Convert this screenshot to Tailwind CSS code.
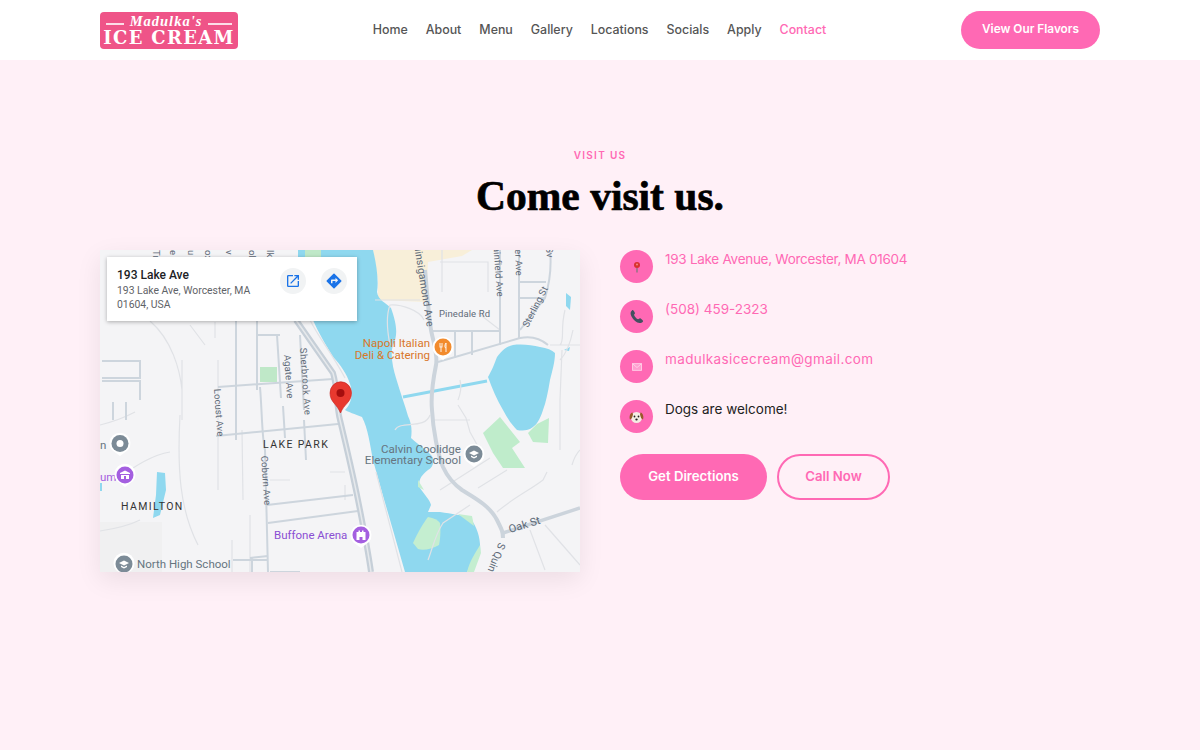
<!DOCTYPE html>
<html lang="en">
<head>
  <meta charset="UTF-8">
  <meta name="viewport" content="width=device-width, initial-scale=1">
  <title>Madulka's Ice Cream - Contact</title>
  <script src="https://cdn.jsdelivr.net/npm/@tailwindcss/browser@4"></script>
</head>
<body class="bg-[#fff0f7] min-h-screen font-['Inter',sans-serif] text-[#111]">

  <!-- nav -->
  <header class="bg-white h-[60px] px-[100px] flex items-center justify-between">
    <a href="#" class="w-[138px] h-[37px] bg-[#ef5488] rounded-[4px] flex flex-col items-center justify-center text-white overflow-hidden">
      <span class="flex items-center gap-[6px] h-[14px] mt-[1px]">
        <span class="w-[18px] h-[1.5px] bg-white/80 mt-[5px]"></span>
        <span class="font-['Liberation_Serif',serif] italic font-bold text-[14.500px] leading-none tracking-[1px]">Madulka's</span>
        <span class="w-[24px] h-[1.5px] bg-white/80 mt-[5px]"></span>
      </span>
      <span class="font-['DejaVu_Serif',serif] font-bold text-[18px] leading-[18px] whitespace-nowrap tracking-[1.300px]">ICE CREAM</span>
    </a>
    <nav class="flex items-center gap-[18px] text-[12.400px] font-medium text-[#555]">
      <a href="#">Home</a>
      <a href="#">About</a>
      <a href="#">Menu</a>
      <a href="#">Gallery</a>
      <a href="#">Locations</a>
      <a href="#">Socials</a>
      <a href="#">Apply</a>
      <a href="#" class="text-[#ff69b4]">Contact</a>
    </nav>
    <a href="#" class="w-[139px] h-[38px] rounded-full bg-[#ff69b4] text-white text-[11.800px] font-semibold flex items-center justify-center">View Our Flavors</a>
  </header>

  <main class="max-w-[1000px] mx-auto">
    <div class="pt-[89px] text-center">
      <p class="text-[10px] leading-[12px] font-semibold tracking-[1.300px] text-[#ff69b4]">VISIT US</p>
      <h1 class="font-['Liberation_Serif',serif] font-bold text-[41.500px] leading-[48px] mt-[11px] text-black [-webkit-text-stroke:0.7px_black]">Come visit us.</h1>
    </div>

    <div class="grid grid-cols-[480px_1fr] gap-[40px] mt-[30px]">
      <!-- map -->
      <div class="relative h-[322px] overflow-hidden shadow-[0_8px_24px_rgba(0,0,0,0.08)] bg-[#f4f4f6]">
        <svg class="w-full h-full block" viewBox="100 250 480 322" xmlns="http://www.w3.org/2000/svg">
          <rect x="100" y="250" width="480" height="322" fill="#f4f4f6"/>
          <!-- land colours -->
          <path d="M373 250H472L462 256L428 262L426 302L378 300L378 280Z" fill="#f8efd9"/>
          <path d="M260 367H277V382H260Z" fill="#bfe8c8"/>
          <path d="M483 433L500 417L520 442L512 448L525 468L503 468L493 453Z" fill="#bfeccb"/>
          <path d="M528 433L537 424L549 418L548 443L533 442Z" fill="#bfeccb"/>
          <!-- water -->
          <path d="M298 250H373C376 262 379 280 377 292C378 300 386 303 391 308C397 325 398 335 393 345C390 355 393 368 396 378C400 392 405 405 408 416C412 424 412 432 411 438C420 446 430 452 433 458C434 464 432 468 428 470C420 476 418 482 420 488C424 494 430 500 431 505L428 512L440 512C452 514 462 515 470 518C478 528 481 540 480 553C474 560 470 566 467 572H405C396 540 384 500 373 460C370 445 368 428 362 417C355 414 348 412 345 410C352 404 353 392 350 384C347 374 340 364 333 357C326 345 318 332 313 320L298 300Z" fill="#8fd8ef"/>
          <path d="M305 250H321V257H305Z" fill="#bfe8c8"/>
          <path d="M413 543C418 532 424 522 428 517C434 518 438 520 440 523C441 532 440 540 439 545C432 549 423 551 418 549Z" fill="#c4eed0"/>
          <path d="M458 514L472 516L474 526Z" fill="#c4eed0"/>
          <path d="M467 572C470 560 476 552 480 545L481 553L474 572Z" fill="#c4eed0"/>
          <path d="M418 480L424 490L418 487Z" fill="#c4eed0"/>
          <path d="M488 377C492 370 494 365 497 357C503 349 508 346 513 345C522 344 532 345 540 347C547 348 552 350 555 353C555 362 552 372 550 380C548 392 546 402 543 410C540 420 536 425 533 427C528 431 522 431 517 430C512 425 507 418 503 410C497 400 492 388 488 377Z" fill="#8fd8ef"/>
          <path d="M403 397L487 381" stroke="#8fd8ef" stroke-width="3" fill="none"/>
          <path d="M157 472L165 473L166 490L160 515L153 518L156 495Z" fill="#8fd8ef"/>
          <path d="M566 293L571 297L570 310L566 306Z" fill="#8fd8ef"/>
          <path d="M564 350L570 347L569 351Z" fill="#8fd8ef"/>
          <path d="M100 483H102V491H100Z" fill="#8fd8ef"/>
          <rect x="100" y="522" width="62" height="50" fill="#f0f0f1"/>
          <!-- minor roads -->
          <g fill="none" stroke="#e0e2e6" stroke-width="1.200">
            <path d="M150 321C172 340 180 370 182 390M182 360V420"/>
            <path d="M215 322V338M190 325L205 345"/>
            <path d="M218 360V420M218 425V490M242 430L243 500"/>
            <path d="M135 412C120 420 100 425 100 425M170 452C150 455 130 470 115 480M100 531C120 528 130 525 140 520"/>
            <path d="M180 415C177 470 180 510 198 545M232 540V572M250 515V572"/>
            <path d="M270 480H290M330 472H345M345 485V500"/>
            <path d="M310 320C320 340 330 350 345 378M376 472L402 572"/>
            <path d="M442 250V292M375 300H420M440 262H488V292M424 320C420 310 400 304 390 305C385 318 388 335 390 345"/>
            <path d="M460 380C462 388 460 395 458 400M434 420H470M430 415C425 430 400 420 395 430"/>
            <path d="M458 405L466 418L470 432L480 450M440 490L490 458M478 488L507 470M497 512C510 500 530 490 543 480L547 472M470 505L443 523C435 535 432 550 428 560"/>
            <path d="M530 530L545 570M545 525L580 565M572 465C575 455 580 450 580 450M562 350L560 400V450M565 310C560 330 565 340 560 345M550 345L580 345"/>
            <path d="M573 330C570 345 565 355 560 360"/>
            <path d="M478 313L500 330"/>
          </g>
          <!-- local streets -->
          <g fill="none" stroke="#cdd5dd" stroke-width="2">
            <path d="M102 361H140V378H102M102 381H140V400M113 402V420M126 402V420"/>
            <path d="M236 320V440M257 320V390"/>
            <path d="M218 387L333 379"/>
            <path d="M216 436L338 424"/>
            <path d="M260 387C262 410 262 440 265 450L268 572"/>
            <path d="M277 335L281 398M280 335H258"/>
            <path d="M283 406L285 438M300 335L304 410M304 420L306 460"/>
            <path d="M267 505L353 495M268 523L358 511"/>
            <path d="M250 558L268 556M233 560H268M252 558V572M270 572H300"/>
            <path d="M430 331H500M455 331V358M472 331V355M500 250V345M520 282H546M519 250V338"/>
            <path d="M519 298H545M520 330L545 298C549 285 552 270 550 250M438 362L520 338C530 336 540 338 548 345"/>
          </g>
          <!-- main roads -->
          <g fill="none">
            <path d="M296 320L333 373C338 390 336 405 340 420C346 445 352 470 358 500C363 525 368 550 371 572" stroke="#c6cfd8" stroke-width="6"/>
            <path d="M296 320L333 373C338 390 336 405 340 420C346 445 352 470 358 500C363 525 368 550 371 572" stroke="#e6e9ec" stroke-width="1.500"/>
            <path d="M425 270C427 290 428 310 431 330C434 345 438 355 436 365C432 385 431 400 432 410C433 430 438 455 443 467C448 478 455 485 462 490C475 498 490 506 497 520C502 530 503 532 503 538" stroke="#ccd4dc" stroke-width="4"/>
            <path d="M503 533L580 508" stroke="#ccd4dc" stroke-width="3.500"/>
          </g>
          <!-- street labels -->
          <g font-family="Roboto, sans-serif" font-size="9.500" fill="#5e6a78" letter-spacing="0.100">
            <text transform="translate(284 355) rotate(86)">Agate Ave</text>
            <text transform="translate(300 348) rotate(86)" letter-spacing="0.500">Sherbrook Ave</text>
            <text transform="translate(214 389) rotate(86)">Locust Ave</text>
            <text transform="translate(261 456) rotate(86)">Coburn Ave</text>
            <text transform="translate(427 327) rotate(81)" text-anchor="end" font-size="10.500">Quinsigamond Ave</text>
            <text transform="translate(497 297) rotate(86)" text-anchor="end">Plainfield Ave</text>
            <text transform="translate(516 276) rotate(88)" text-anchor="end">Fowler Ave</text>
            <text transform="translate(528 328) rotate(-63)">Sterling St</text>
            <text transform="translate(547 258) rotate(85)" text-anchor="end">Sv</text>
            <text x="439" y="317" font-size="9.500">Pinedale Rd</text>
            <text transform="translate(510 533) rotate(-17)" font-size="11">Oak St</text>
            <text transform="translate(499 542) rotate(112)" font-size="10.500">S Quin</text>
            <text transform="translate(153 250) rotate(90)">Tr</text>
            <text transform="translate(170 250) rotate(90)">e</text>
            <text transform="translate(188 250) rotate(90)">u</text>
            <text transform="translate(205 250) rotate(90)">ox</text>
            <text transform="translate(226 250) rotate(90)">v</text>
            <text transform="translate(249 250) rotate(90)">ob</text>
            <text transform="translate(267 250) rotate(90)">lk</text>
          </g>
          <!-- area labels -->
          <g font-family="Roboto, sans-serif" font-size="10.500" font-weight="400" fill="#333" letter-spacing="1.400">
            <text x="263" y="448">LAKE PARK</text>
            <text x="121" y="510">HAMILTON</text>
          </g>
          <!-- place labels -->
          <g font-family="Roboto, sans-serif" font-size="11.500">
            <text x="430" y="347" text-anchor="end" fill="#d9772a">Napoli Italian</text>
            <text x="430" y="359" text-anchor="end" fill="#d9772a">Deli &amp; Catering</text>
            <text x="461" y="453" text-anchor="end" fill="#66757f" font-size="11.600">Calvin Coolidge</text>
            <text x="461" y="464" text-anchor="end" fill="#66757f" font-size="11.600">Elementary School</text>
            <text x="137" y="568" fill="#66757f">North High School</text>
            <text x="274" y="539" fill="#8a4fd3">Buffone Arena</text>
            <text x="100" y="449" fill="#66757f">n</text>
            <text x="100" y="481" fill="#a45fe0">um</text>
          </g>
          <!-- poi markers -->
          <g>
            <path d="M443 360L435 354A10.500 10.500 0 1 1 451 354Z" fill="#fff"/><circle cx="443" cy="347" r="8.500" fill="#f28b2d"/>
            <path d="M440 343V347.500M442 343V347.500M440 347H442M441 347.500V352M446 343V352M446 343C444.500 345 444.500 348 446 348" stroke="#fff" stroke-width="0.900" fill="none"/>
            <path d="M120 456L112 450A10.500 10.500 0 1 1 128 450Z" fill="#fff"/><circle cx="120" cy="443.500" r="8.500" fill="#7c8b97"/><circle cx="120" cy="443.500" r="3.500" fill="#fff"/>
            <path d="M125 487L117 481A10.500 10.500 0 1 1 133 481Z" fill="#fff"/><circle cx="125" cy="475" r="8.500" fill="#a45fe0"/>
            <path d="M120 473L125 470.500L130 473V474H120ZM121 475H129V479H121Z" fill="#fff"/><rect x="124" y="476" width="2" height="3" fill="#a45fe0"/>
            <path d="M124 576L116 570A10.500 10.500 0 1 1 132 570Z" fill="#fff"/><circle cx="124" cy="564" r="8.500" fill="#7c8b97"/>
            <path d="M119 563L124 560.500L129 563L124 565.500ZM121 565.500V567L124 568.500L127 567V565.500L124 567Z" fill="#fff"/>
            <path d="M474 467L466 461A10.500 10.500 0 1 1 482 461Z" fill="#fff"/><circle cx="474" cy="454" r="8.500" fill="#7c8b97"/>
            <path d="M469 453L474 450.500L479 453L474 455.500ZM471 455.500V457L474 458.500L477 457V455.500L474 457Z" fill="#fff"/>
            <path d="M361 548L353 542A10.500 10.500 0 1 1 369 542Z" fill="#fff"/><circle cx="361" cy="535" r="8.500" fill="#a45fe0"/>
            <path d="M356.500 532H358.500V530.500H360V532H362V530.500H363.500V532H365.500V540H362.500V537H359.500V540H356.500Z" fill="#fff"/>
          </g>
          <!-- main pin -->
          <path d="M340.500 413C337 404 330 402 330 393A10.500 11 0 1 1 351.500 393C351.500 402 344 404 340.500 413Z" fill="#e8392f" stroke="#c5221f" stroke-width="0.600"/>
          <circle cx="340.500" cy="393" r="4" fill="#a50e0e"/>
        </svg>

        <!-- place card -->
        <div class="absolute left-[7px] top-[7px] w-[250px] h-[64px] bg-white shadow-[0_1px_4px_rgba(0,0,0,0.3)] flex font-['Roboto',sans-serif]">
          <div class="w-[170px] pl-[10px] pt-[11px]">
            <p class="text-[12px] leading-[14px] font-medium text-[#202124]">193 Lake Ave</p>
            <p class="text-[10.400px] leading-[13.500px] text-[#5f6368] mt-[2px]">193 Lake Ave, Worcester, MA 01604, USA</p>
          </div>
          <div class="flex gap-[15px] ml-[3px] pt-[11px]">
            <span class="w-[26px] h-[26px] rounded-full bg-[#f1f3f4] flex items-center justify-center">
              <svg class="w-[16px] h-[16px]" viewBox="0 0 24 24" fill="#1a73e8"><path d="M19 19H5V5h7V3H5a2 2 0 0 0-2 2v14a2 2 0 0 0 2 2h14a2 2 0 0 0 2-2v-7h-2v7zM14 3v2h3.590l-9.830 9.830 1.410 1.410L19 6.410V10h2V3h-7z"/></svg>
            </span>
            <span class="w-[26px] h-[26px] rounded-full bg-[#f1f3f4] flex items-center justify-center">
              <svg class="w-[18px] h-[18px]" viewBox="0 0 24 24" fill="#1a73e8"><path d="M21.710 11.290l-9-9a1 1 0 0 0-1.420 0l-9 9a1 1 0 0 0 0 1.420l9 9a1 1 0 0 0 1.420 0l9-9a1 1 0 0 0 0-1.420zM14 14.500V12h-4v3H8v-4a1 1 0 0 1 1-1h5V7.500l3.500 3.500-3.500 3.500z"/></svg>
            </span>
          </div>
        </div>
      </div>

      <!-- contact details -->
      <div>
        <ul class="flex flex-col gap-[17px] text-[13.500px] leading-[18px]">
          <li class="flex items-start gap-[12px]">
            <span class="w-[33px] h-[33px] rounded-full bg-[#ff69b4] flex items-center justify-center shrink-0">
              <svg class="w-[12px] h-[12px]" viewBox="0 0 12 12"><path d="M6 6.500V11.500" stroke="#777" stroke-width="1.200"/><circle cx="6" cy="4" r="3" fill="#d8322e"/><circle cx="6" cy="3.500" r="1" fill="#f28a85"/></svg>
            </span>
            <a href="#" class="text-[#ff69b4] tracking-[-0.280px] whitespace-nowrap">193 Lake Avenue, Worcester, MA 01604</a>
          </li>
          <li class="flex items-start gap-[12px]">
            <span class="w-[33px] h-[33px] rounded-full bg-[#ff69b4] flex items-center justify-center shrink-0">
              <svg class="w-[15px] h-[15px]" viewBox="0 0 24 24"><path d="M4 3C2 5 2 8 4 12C7 18 12 22 17 22.500C20 22.500 22 21 22.500 19.500C23 18.500 18 14.500 17 15L14.500 16.500C12 15.500 9 12 8 9L9.500 7C10 6 7 1.500 6 1.500C5.500 1.500 4.500 2.500 4 3Z" fill="#445060"/></svg>
            </span>
            <a href="#" class="text-[#ff69b4]">(508) 459-2323</a>
          </li>
          <li class="flex items-start gap-[12px]">
            <span class="w-[33px] h-[33px] rounded-full bg-[#ff69b4] flex items-center justify-center shrink-0">
              <svg class="w-[10px] h-[8px]" viewBox="0 0 9 7" fill="none" stroke="#ffd3e8" stroke-width="0.800"><rect x="0.500" y="0.500" width="8" height="6" fill="#ff9fd0"/><path d="M0.500 0.500L4.500 4L8.500 0.500"/></svg>
            </span>
            <a href="#" class="text-[#ff69b4] tracking-[0.380px]">madulkasicecream@gmail.com</a>
          </li>
          <li class="flex items-start gap-[12px]">
            <span class="w-[33px] h-[33px] rounded-full bg-[#ff69b4] flex items-center justify-center shrink-0">
              <svg class="w-[15px] h-[14px]" viewBox="0 0 15 14"><ellipse cx="7.500" cy="7.500" rx="5.500" ry="5.500" fill="#f5ede4"/><path d="M3.500 2.500C1 3 0 7 1 9.500C2.500 9.500 3.500 7 4 4.500ZM11.500 2.500C14 3 15 7 14 9.500C12.500 9.500 11.500 7 11 4.500Z" fill="#9a5a2a"/><circle cx="5.500" cy="6.500" r="0.900" fill="#222"/><circle cx="9.500" cy="6.500" r="0.900" fill="#222"/><ellipse cx="7.500" cy="9.500" rx="1.200" ry="0.900" fill="#222"/></svg>
            </span>
            <span class="text-[#222]">Dogs are welcome!</span>
          </li>
        </ul>
        <div class="flex gap-[10px] mt-[21px]">
          <a href="#" class="w-[147px] h-[46px] rounded-full bg-[#ff69b4] text-white text-[13.200px] font-semibold flex items-center justify-center">Get Directions</a>
          <a href="#" class="w-[113px] h-[46px] rounded-full border-2 border-[#ff69b4] text-[#ff69b4] text-[13.200px] font-semibold flex items-center justify-center">Call Now</a>
        </div>
      </div>
    </div>
  </main>

</body>
</html>
